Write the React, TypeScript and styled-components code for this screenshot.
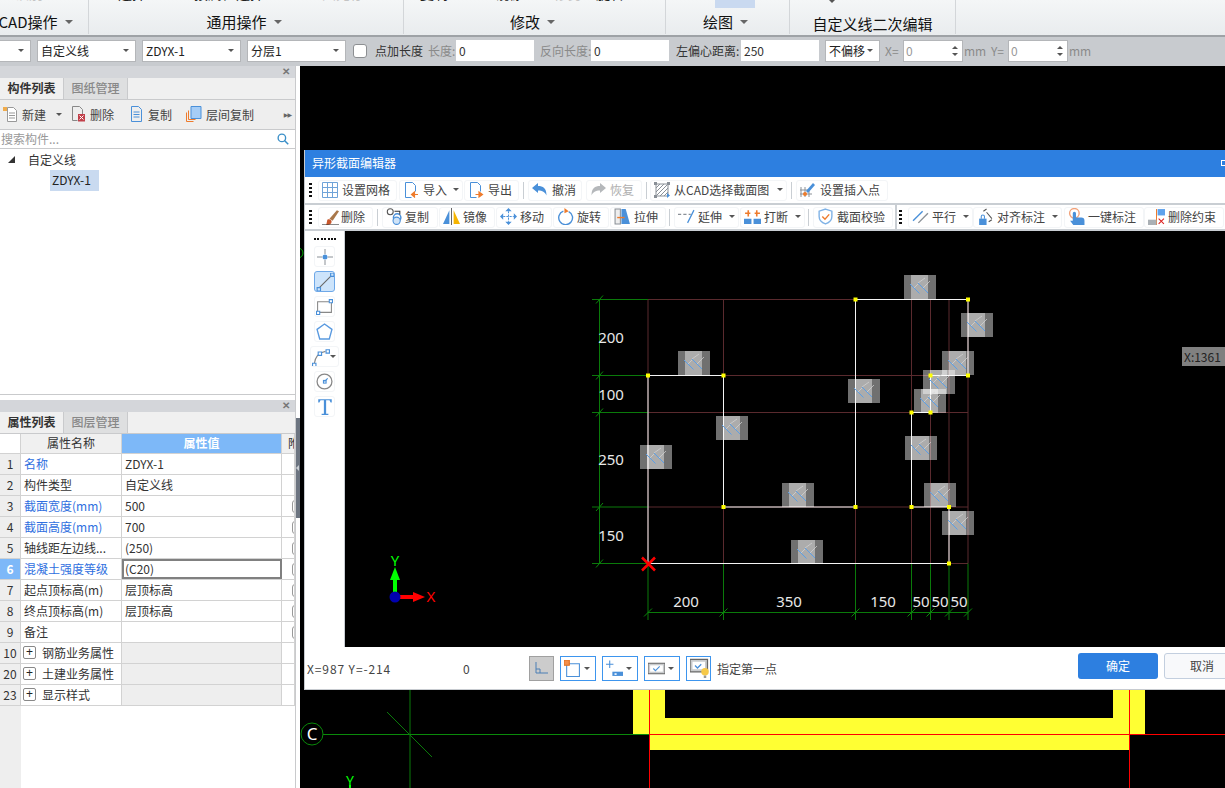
import React from "react";
import styled, { createGlobalStyle } from "styled-components";

const Global = createGlobalStyle`
  html, body { margin: 0; padding: 0; background: #000; overflow: hidden; }
  * { box-sizing: border-box; }
`;

const FONT = `"Noto Sans CJK SC", "Noto Sans", sans-serif`;

const Page = styled.div`
  width: 1225px; height: 788px; overflow: hidden; display: flex; flex-direction: column;
  font-family: ${FONT}; font-size: 12px; color: #333; background: #000;
`;

/* ---------- ribbon ---------- */
const Ribbon = styled.div`
  height: 37px; flex: none; display: flex; overflow: hidden;
  background: linear-gradient(#f4f6f7, #e9ecee); border-bottom: 2px solid #9ea2a6;
`;
const RibbonGroup = styled.div<{ $w: number; $pad?: number; $pr?: number }>`
  width: ${(p) => p.$w}px; flex: none; height: 34px; position: relative; overflow: hidden;
  border-right: 1px solid #d3d6d9; display: flex; justify-content: center; align-items: flex-end;
  padding-bottom: ${(p) => p.$pad ?? 2}px; padding-right: ${(p) => p.$pr ?? 4}px; font-size: 15px; color: #111; gap: 7px; line-height: 20px;
`;
const RibbonCaret = styled.span`
  width: 0; height: 0; border: 4px solid transparent; border-top: 4px solid #666; border-bottom: 0; margin-bottom: 8px;
`;
const RibbonCrop = styled.span<{ $x: number; $muted?: boolean }>`
  position: absolute; top: -15px; left: ${(p) => p.$x}px; font-size: 14px; line-height: 17px; white-space: nowrap;
  color: ${(p) => (p.$muted ? "#c4c4c4" : "#222")};
`;
const RibbonHighlight = styled.span`
  position: absolute; top: 0; left: 49px; width: 40px; height: 8px; background: #c9d9f0;
`;
const RibbonArrow = styled.span`
  position: absolute; top: 0; left: 39px; width: 0; height: 0;
  border: 3px solid transparent; border-top: 3px solid #555; border-bottom: 0;
`;

/* ---------- option bar ---------- */
const OptionBar = styled.div`
  height: 29px; flex: none; display: flex; align-items: center; background: #c8cbcf; padding-bottom: 3px; padding-top: 1px;
`;
const SelectBox = styled.div<{ $w: number; $ml: number }>`
  width: ${(p) => p.$w}px; margin-left: ${(p) => p.$ml}px; height: 22px; flex: none; background: #fff;
  border: 1px solid #b4b6b9; display: flex; align-items: center; justify-content: space-between;
  padding: 0 6px 0 3px; color: #222; font-size: 12px; white-space: nowrap;
`;
const Caret = styled.span`
  width: 0; height: 0; border: 3px solid transparent; border-top: 3px solid #555; border-bottom: 0; flex: none;
`;
const CheckBox = styled.span`
  width: 14px; height: 14px; margin-left: 7px; flex: none; background: #fff; border: 1px solid #8c8f92; border-radius: 3px;
`;
const OptLabel = styled.span<{ $w: number; $ml: number; $muted?: boolean }>`
  width: ${(p) => p.$w}px; margin-left: ${(p) => p.$ml}px; flex: none; white-space: nowrap; font-size: 12px;
  color: ${(p) => (p.$muted ? "#8a8a8a" : "#333")};
`;
const OptInput = styled.div<{ $muted?: boolean }>`
  width: 78px; height: 21px; margin-left: 1px; flex: none; background: #fff; padding-left: 3px; line-height: 21px;
  color: ${(p) => (p.$muted ? "#888" : "#333")};
`;
const Spin = styled.div`
  width: 60px; height: 22px; margin-left: 1px; flex: none; background: #fff; border: 1px solid #b4b6b9;
  display: flex; align-items: center; justify-content: space-between; padding: 0 4px 0 2px; color: #999;
`;
const SpinArrows = styled.span`
  display: flex; flex-direction: column; gap: 4px;
`;
const SpinUp = styled.span`
  width: 0; height: 0; border: 3px solid transparent; border-bottom: 3px solid #555; border-top: 0;
`;

/* ---------- main area ---------- */
const Main = styled.div`
  flex: 1; display: flex; min-height: 0;
`;
const LeftColumn = styled.div`
  width: 296px; flex: none; display: flex; flex-direction: column; background: #fff; overflow: hidden; border-right: 1px solid #c9cacc;
`;
const Splitter = styled.div`
  width: 4px; flex: none; background: #fff; position: relative;
`;
const SplitterThumb = styled.span`
  position: absolute; left: 0; right: 0; top: 352px; height: 100px; background: #6c7480;
`;
const SplitterTick = styled.span`
  position: absolute; left: 0; top: 47px; width: 0; height: 0;
  border: 3px solid transparent; border-right: 3px solid #c9ced3; border-left: 0;
`;
const PanelStrip = styled.div`
  height: 12px; flex: none; background: #d4d6da; display: flex; justify-content: flex-end; align-items: center;
  padding-right: 5px; color: #777; font-size: 10px; line-height: 12px; font-family: "Liberation Sans", sans-serif; font-weight: 700;
`;
const TabsRow = styled.div`
  height: 22px; flex: none; display: flex; background: #f0f0f0; border-bottom: 1px solid #c9cacc;
`;
const Tab = styled.div<{ $active?: boolean }>`
  width: 64px; flex: none; display: flex; align-items: center; justify-content: center; font-size: 12px; padding-bottom: 2px;
  font-weight: ${(p) => (p.$active ? 700 : 500)}; color: ${(p) => (p.$active ? "#333" : "#888")};
  background: ${(p) => (p.$active ? "#f0f0f0" : "#dedfe0")}; border-right: 1px solid #c9cacc;
`;
const PanelTools = styled.div`
  height: 30px; flex: none; background: #eeeeee; display: flex; align-items: center; border-bottom: 1px solid #c9cacc; position: relative;
`;
const PanelTool = styled.span<{ $ml: number }>`
  margin-left: ${(p) => p.$ml}px; display: inline-flex; align-items: center; gap: 4px; white-space: nowrap; color: #444; padding-bottom: 1px;
`;
const MoreArrows = styled.span`
  margin-left: auto; margin-right: 4px; color: #666; font-size: 6px; letter-spacing: -1px; font-family: "DejaVu Sans", sans-serif;
`;
const Search = styled.div`
  height: 19px; flex: none; background: #fff; border-bottom: 1px solid #c9cacc; display: flex; align-items: center;
  justify-content: space-between; padding: 0 6px 1px 1px; color: #999;
`;
const Tree = styled.div`
  height: 246px; flex: none; background: #fff; color: #333; border-bottom: 1px solid #c9cacc;
`;
const TreeRow = styled.div<{ $indent: number }>`
  height: 20px; display: flex; align-items: center; padding-left: ${(p) => p.$indent}px; gap: 13px;
`;
const TreeTri = styled.span`
  width: 0; height: 0; border-left: 7px solid transparent; border-bottom: 7px solid #333;
`;
const TreeSel = styled.span`
  background: #c9daf0; height: 21px; line-height: 20px; margin-top: 2px; padding: 0 2px; width: 49px; color: #222; white-space: nowrap;
`;
const PanelGap = styled.div`
  height: 5px; flex: none; background: #fff;
`;
const Table = styled.div`
  flex: 1; background: #fff; display: flex; flex-direction: column;
`;
const Row = styled.div<{ $h?: number }>`
  height: ${(p) => p.$h ?? 21}px; flex: none; display: flex; border-bottom: 1px solid #d2d2d2;
`;
const Cell = styled.div<{ $w: number; $bg?: string; $color?: string; $center?: boolean; $boxed?: boolean; $bold?: boolean; $pl?: number }>`
  width: ${(p) => p.$w}px; flex: none; position: relative; border-right: 1px solid #d2d2d2; white-space: nowrap; overflow: hidden;
  display: flex; align-items: center; padding-left: ${(p) => p.$pl ?? (p.$center ? 0 : 3)}px; padding-bottom: 2px;
  justify-content: ${(p) => (p.$center ? "center" : "flex-start")};
  background: ${(p) => p.$bg ?? "#fff"}; color: ${(p) => p.$color ?? "#333"}; font-weight: ${(p) => (p.$bold ? 700 : 400)};
  ${(p) => (p.$boxed ? "outline: 2px solid #808080; outline-offset: -2px;" : "")}
`;
const MiniBtn = styled.span`
  position: absolute; left: 10px; top: 4px; width: 10px; height: 13px; border: 1px solid #999; border-radius: 3px; background: #fff;
`;
const Plus = styled.span`
  width: 13px; height: 13px; border: 1px solid #888; border-radius: 2px; margin-right: 6px; font-size: 12px; line-height: 10px;
  text-align: center; color: #222; flex: none; font-family: "Liberation Sans", sans-serif; background: #fff;
`;
const IndexFill = styled.div`
  flex: 1; width: 21px; background: #eee;
`;

/* ---------- cad ---------- */
const Cad = styled.div`
  flex: 1; position: relative; background: #000; overflow: hidden;
`;
const CadBack = styled.svg`
  position: absolute; inset: 0; display: block;
`;
const Dialog = styled.div`
  position: absolute; left: 4px; top: 84px; width: 960px; height: 540px; background: #fff; display: flex; flex-direction: column;
  border-bottom: 1px solid #c7cbd0; border-left: 1px solid #c7cbd0;
`;
const TitleBar = styled.div`
  height: 27px; flex: none; background: #2d7fe0; color: #fff; padding: 0 0 2px 7px; display: flex; align-items: center; position: relative; font-size: 12px;
`;
const WinBtn = styled.span`
  position: absolute; left: 916px; top: 10px; width: 6px; height: 6px; border: 1px solid #fff;
`;
const ToolBar = styled.div<{ $h: number }>`
  height: ${(p) => p.$h}px; flex: none; background: #fff; display: flex; align-items: center; padding-left: 4px;
  border-bottom: 2px solid #c9ced3;
`;
const Grip = styled.span`
  width: 3px; height: 14px; margin-right: 6px; flex: none;
  background: repeating-linear-gradient(#111 0 2px, transparent 2px 4px);
`;
const TB = styled.div<{ $w: number; $ml?: number; $off?: boolean; $gap?: number }>`
  width: ${(p) => p.$w}px; margin-left: ${(p) => p.$ml ?? 0}px; height: 21px; flex: none; display: flex; align-items: center;
  gap: ${(p) => p.$gap ?? 4}px; padding: 0 0 1px 3px; border: 1px solid #f3f5f7; border-radius: 3px; white-space: nowrap; font-size: 12px;
  color: ${(p) => (p.$off ? "#b0b0b0" : "#444")};
`;
const TBCaret = styled(Caret)`
  margin-left: auto; margin-right: 3px;
`;
const Sep = styled.span<{ $ml: number; $mr: number }>`
  width: 1px; height: 17px; background: #c9ced3; margin-left: ${(p) => p.$ml}px; margin-right: ${(p) => p.$mr}px; flex: none;
`;
const ThickSep = styled.span`
  width: 2px; height: 24px; background: #c9ced3; margin: 0 2px 0 2px; flex: none;
`;
const Body = styled.div`
  flex: 1; display: flex; min-height: 0;
`;
const SideTools = styled.div`
  width: 40px; flex: none; background: #fff; border-right: 1px solid #c9ced3; display: flex; flex-direction: column; align-items: center; padding-top: 7px;
`;
const SideDots = styled.span`
  width: 22px; height: 2px; margin-bottom: 6px;
  background: repeating-linear-gradient(90deg, #111 0 2px, transparent 2px 3.4px);
`;
const SideBtn = styled.div<{ $sel?: boolean; $wide?: boolean }>`
  width: ${(p) => (p.$wide ? 29 : 21)}px; height: 21px; margin-bottom: 4px; display: flex; align-items: center;
  justify-content: ${(p) => (p.$wide ? "space-between" : "center")}; padding: ${(p) => (p.$wide ? "0 3px 0 1px" : 0)}; border-radius: 3px;
  border: 1px solid ${(p) => (p.$sel ? "#6ea8e8" : "#f3f5f7")}; background: ${(p) => (p.$sel ? "#cde4fb" : "#fff")};
`;
const Drawing = styled.svg`
  flex: none; display: block; background: #000;
`;
const StatusBar = styled.div`
  height: 42px; flex: none; background: #fff; display: flex; align-items: center; color: #444; position: relative;
`;
const Coords = styled.span`
  margin-left: 2px; width: 156px; flex: none; font-size: 12px; letter-spacing: 0.9px; white-space: nowrap;
`;
const Zero = styled.span`
  width: 66px; flex: none;
`;
const StatusBtn = styled.div<{ $w: number; $gray?: boolean }>`
  width: ${(p) => p.$w}px; height: 25px; margin-right: 6px; flex: none; display: flex; align-items: center; justify-content: space-between;
  padding: 0 5px 0 3px; border: 1px solid ${(p) => (p.$gray ? "#a0a0a0" : "#3d95ee")}; background: ${(p) => (p.$gray ? "#cccccc" : "#fff")};
`;
const Hint = styled.span`
  margin-right: 301px; width: 60px; flex: none; white-space: nowrap;
`;
const Primary = styled.div`
  width: 80px; height: 26px; margin-bottom: 4px; flex: none; background: #2d7fe0; color: #fff; border-radius: 3px; display: flex; align-items: center; justify-content: center; padding-bottom: 1px;
`;
const Secondary = styled.div`
  width: 76px; height: 26px; margin: 0 0 4px 6px; flex: none; background: #f8f9fb; color: #444; border: 1px solid #c3cfdf; border-radius: 3px;
  display: flex; align-items: center; justify-content: center; padding-bottom: 1px;
`;
const CoordTag = styled.div`
  position: absolute; left: 877px; top: 197px; width: 60px; height: 19px; background: #808080; color: #222; padding-left: 2px;
  line-height: 19px; font-size: 12px; white-space: nowrap;
`;

/* ---------- icons ---------- */
const B = "#4a90d9", O = "#ee7b2c", G = "#8a9097";
const Ico = ({ children, s = 16 }: { children: React.ReactNode; s?: number }) => (
  <svg width={s} height={s} viewBox="0 0 16 16" fill="none" style={{ flex: "none" }}>{children}</svg>
);
const IGrid = () => <Ico><path d="M.5.5h15v15H.5zM5.500.5v15M10.500.5v15M.5 5.500h15M.5 10.500h15" stroke="#6fa3d8" /></Ico>;
const IImport = () => <Ico><path d="M2.500.5h7l3 3v6M2.500.5v15h6" stroke={B} /><path d="M15 12.500h-3.500M11.500 10l-3 2.500 3 2.500z" stroke={O} fill={O} strokeWidth={1.2} /></Ico>;
const IExport = () => <Ico><path d="M2.500.5h7l3 3v6M2.500.5v15h6" stroke={B} /><path d="M7.500 12.500H11M11 10l3.500 2.500L11 15z" stroke={O} fill={O} strokeWidth={1.2} /></Ico>;
const IUndo = () => <Ico><path d="M0 6l6-5v3c5 0 8.500 2 8.500 9.500-1.500-3.500-4-5-8.500-5V11z" fill={B} /></Ico>;
const IRedo = () => <Ico><path d="M16 6l-6-5v3C5 4 1.500 6 1.500 13.500 3 10 5.500 8.500 10 8.500V11z" fill="#b5b8bb" /></Ico>;
const IHatch = () => <Ico><path d="M2 2h12v12H2z" stroke={G} /><path d="M2 6l4-4M2 10l8-8M2 14l12-12M6 14l8-8M10 14l4-4" stroke={G} /><path d="M0 0h3v3H0zM13 0h3v3h-3zM0 13h3v3H0z" fill={G} /><path d="M13 11l3 2.500-3 2.500z" fill={B} /></Ico>;
const IInsert = () => <Ico><path d="M1 5v10M5 5v10M9 9v6M0 8h8M0 12h12" stroke={G} /><path d="M6 9l7-8 2 2-7 8z" fill={B} /><circle cx="5" cy="12" r="2" fill={O} /></Ico>;
const IBrush = () => <Ico s={17}><path d="M7 10l7-8 2 1-6 9z" fill="#a9784a" /><path d="M5 11c2-1 4 0 4 2s-2 3-5 3z" fill="#c9572c" /><path d="M0 16h16" stroke="#222" /></Ico>;
const ICopy = () => <Ico s={17}><circle cx="4" cy="3.500" r="2.800" stroke="#555" /><circle cx="10.500" cy="9" r="3.500" stroke={B} strokeWidth={1.400} /><circle cx="10" cy="12" r="3.400" fill="#cfe3f7" stroke={B} /><path d="M8 3h5v3" stroke="#333" /></Ico>;
const IMirror = () => <Ico s={17}><path d="M6 2v13H0z" fill={B} /><path d="M8 0v16" stroke="#666" /><path d="M10 2v13h6z" fill="#f7b500" /></Ico>;
const IMove = () => <Ico s={17}><path d="M8 3v10M3 8h10" stroke={B} strokeDasharray="2 1" /><path d="M8 0l3 3H5zM8 16l3-3H5zM0 8l3-3v6zM16 8l-3-3v6z" fill={B} /></Ico>;
const IRotate = () => <Ico s={17}><path d="M6 3a6.500 6.500 0 1 0 5 .3" stroke={B} strokeWidth={1.300} /><path d="M7 0v5l4-2z" fill={O} /></Ico>;
const IStretch = () => <Ico s={17}><path d="M1 1h5v14H1z" fill="#eee" stroke={G} /><path d="M7 1h4l4 14H7z" fill={B} /><path d="M3 9h7" stroke={O} strokeWidth={1.300} /></Ico>;
const IExtend = () => <Ico s={17}><path d="M0 6h3M5 6h3M10 6h2" stroke={G} /><path d="M15 2L9 14" stroke={B} strokeWidth={1.200} /></Ico>;
const IBreak = () => <Ico s={17}><path d="M0 10h7v5H0zM9 10h7v5H9z" fill={B} /><path d="M1 5h5M4 2v6M10 5h5M12 2v6" stroke={O} strokeWidth={1.500} /></Ico>;
const IShield = () => <Ico s={17}><path d="M8 1l6 2v5c0 4-3 6-6 7-3-1-6-3-6-7V3z" stroke="#7fb2e6" strokeWidth={1.300} /><path d="M5 8l2.500 2.500L11.500 6" stroke={O} strokeWidth={1.300} /></Ico>;
const IParallel = () => <Ico s={17}><path d="M1 12L10 3" stroke={B} strokeWidth={1.300} /><path d="M6 14l9-9" stroke={G} strokeWidth={1.300} /></Ico>;
const IAlign = () => <Ico s={17}><path d="M2 10h7v6H2z" fill={B} /><path d="M4 10V8a1.500 1.500 0 0 1 3 0v2" stroke={B} /><path d="M6 3l3-2M9 4l5 6M11 13l3-2" stroke="#555" /></Ico>;
const IHand = () => <Ico s={17}><circle cx="6" cy="5" r="4.500" stroke="#f2a27a" strokeWidth={1.300} /><path d="M4.500 5a1.500 1.500 0 0 1 3 0v4h5c2 0 3 1 3 3v4H5l-3-4h2.500z" fill={B} /></Ico>;
const IDelC = () => <Ico s={17}><path d="M9 1h7v6H9z" fill="#5ea2ec" /><path d="M8 1v15" stroke={O} /><path d="M0 11h8v5H0z" fill="#aab0b5" /><path d="M10 10l5 5M15 10l-5 5" stroke="#d22" /></Ico>;

const INew = () => <Ico><path d="M5.500 1.500h6l3 3v11h-9z" fill="#fff" stroke="#999" /><path d="M7 7h6M7 9.500h6M7 12h6" stroke="#999" /><path d="M1 1h4v4H1z" fill="#f0a030" opacity={0.85} /></Ico>;
const IDel = () => <Ico><path d="M2.500.5h7l3 3v6M2.500.5v14h5" stroke="#888" /><path d="M8 8h7v7.500H8z" fill="#c2404a" /><path d="M9.500 9.500l4 4M13.500 9.500l-4 4" stroke="#fff" /></Ico>;
const IDoc = () => <Ico><path d="M3.500.5h7l3 3v12h-10z" stroke={B} /><path d="M5.500 6h6M5.500 8.500h6M5.500 11h6" stroke={B} /></Ico>;
const ILayer = () => <Ico><path d="M.5 6.500v9h7" stroke={O} /><path d="M2.500 4.500v9h7" stroke={O} /><path d="M5 .5h10v12H5z" fill="#a6cdf6" stroke={B} /></Ico>;
const ISearch = () => <Ico s={12}><circle cx="6.500" cy="6.500" r="5" stroke="#3a8fc8" strokeWidth={1.800} /><path d="M10 10l5 5" stroke="#3a8fc8" strokeWidth={2} /></Ico>;

const SPoint = () => <Ico><path d="M0 8h5M11 8h5M8 0v5M8 11v5" stroke={G} /><circle cx="8" cy="8" r="2.500" fill={B} /></Ico>;
const SLine = () => <Ico s={18}><path d="M3 13L13 3" stroke="#666" /><path d="M1 13h3v3H1zM13 0h3v3h-3z" stroke={B} /></Ico>;
const SRect = () => <Ico s={17}><path d="M1.500 3.500h13v10h-13z" stroke="#888" /><path d="M.5 12.500h3v3h-3zM12.500 1.500h3v3h-3z" stroke={B} fill="#fff" /></Ico>;
const SPoly = () => <Ico s={17}><path d="M8 1l7 5-2.500 9h-9L1 6z" stroke="#5a9ae0" strokeWidth={1.300} /></Ico>;
const SArc = () => <Ico s={18}><path d="M2 14C3 7 6 4 12 3" stroke="#888" /><path d="M.5 13.500h3v3h-3zM5.500 3.500h3v3h-3zM12.500 1.500h3v3h-3z" stroke={B} fill="#fff" /></Ico>;
const SCircle = () => <Ico s={17}><circle cx="8" cy="8" r="7" stroke="#888" strokeWidth={1.200} /><path d="M8 8l3-3" stroke={B} /><rect x="7" y="7" width="2.500" height="2.500" stroke={B} /></Ico>;
const SText = () => <Ico s={18}><path d="M2 1h12v3h-1l-1-2H9v12h2v1H5v-1h2V2H4L3 4H2z" fill={B} /></Ico>;

const SOrtho = () => <Ico><path d="M3 2v11h12M3 9h4v4" stroke="#4a7fb5" /></Ico>;
const SSnap = () => <Ico s={17}><path d="M2.500 3.500h12v12h-12z" stroke={B} /><path d="M0 0h5v5H0z" fill="#f58f4a" stroke="#e07020" /></Ico>;
const SDim = () => <Ico s={17}><path d="M0 4h7M3.500 .5v7" stroke={B} /><path d="M6 11h11v4H6z" fill={B} /><path d="M8 12.500h2v1.500H8z" fill="#fff" /></Ico>;
const SCheck = () => <Ico s={17}><path d="M0 3h16v10H0z" fill="#c9cbcd" stroke="#666" /><path d="M2 5h12v6H2z" fill="#fff" /><path d="M5 8l2 2 4-4" stroke={B} /></Ico>;
const SBulb = () => <Ico s={20}><path d="M0 1h14v10H0z" fill="#c9cbcd" stroke="#666" /><path d="M2 3h10v6H2z" fill="#fff" /><path d="M4 6l2 2 3-3" stroke={B} /><circle cx="12" cy="11" r="3" fill="#f7c948" /><path d="M11 14h2v2h-2z" fill="#999" /></Ico>;

/* ---------- drawing data ---------- */
const DX = 345, DY = 231;
const xs = [648, 723.5, 855.5, 911.5, 930.5, 949, 968];
const ys = [299.5, 375.5, 412.5, 507, 563.5];
const outline: [number, number][] = [
  [648, 563.5], [648, 375.5], [723.5, 375.5], [723.5, 507], [855.5, 507], [855.5, 299.5], [968, 299.5], [968, 375.5],
  [930.5, 375.5], [930.5, 412.5], [911.5, 412.5], [911.5, 507], [949, 507], [949, 563.5],
];
const tiles: [number, number][] = [
  [904, 275], [961, 313], [942, 351], [923, 370], [914, 389], [848, 379], [678, 351],
  [716, 416], [640, 445], [905, 436], [782, 483], [924, 483], [942, 511], [791, 540],
];
const Tile = ({ x, y }: { x: number; y: number }) => (
  <g transform={`translate(${x} ${y})`}>
    <rect width="32" height="24" fill="#fff" fillOpacity={0.44} />
    <rect x="7" width="17" height="24" fill="#fff" fillOpacity={0.42} />
    <path d="M10 13l5-5M19 13l7-7M14 8l7-5" stroke="#d8d8d8" strokeWidth={1} opacity={0.7} />
    <path d="M6 9l9.500 9.500M14 8l10 10" stroke="#5b9fe6" strokeWidth={1} />
  </g>
);
const DimText = styled.text`
  fill: #e8e8e8; font-family: "Noto Sans", sans-serif; font-size: 15px; text-anchor: middle;
`;
const AxisText = styled.text<{ $c: string }>`
  fill: ${(p) => p.$c}; font-family: "Noto Sans", sans-serif; font-size: 15px; text-anchor: middle;
`;

const rows: { n: string; name: string; val: string; blue?: boolean; btn?: boolean; sel?: boolean }[] = [
  { n: "1", name: "名称", val: "ZDYX-1", blue: true },
  { n: "2", name: "构件类型", val: "自定义线" },
  { n: "3", name: "截面宽度(mm)", val: "500", blue: true, btn: true },
  { n: "4", name: "截面高度(mm)", val: "700", blue: true, btn: true },
  { n: "5", name: "轴线距左边线...", val: "(250)", btn: true },
  { n: "6", name: "混凝土强度等级", val: "(C20)", blue: true, btn: true, sel: true },
  { n: "7", name: "起点顶标高(m)", val: "层顶标高", btn: true },
  { n: "8", name: "终点顶标高(m)", val: "层顶标高", btn: true },
  { n: "9", name: "备注", val: "", btn: true },
];

export default function App() {
  return (
    <Page>
      <Global />
      <Ribbon>
        <RibbonGroup $w={89} $pr={0}><RibbonCrop $x={15} $muted>识别</RibbonCrop><span style={{ marginLeft: -17 }}>CAD操作</span><RibbonCaret /></RibbonGroup>
        <RibbonGroup $w={315}><RibbonCrop $x={29}>选择</RibbonCrop><RibbonCrop $x={105}>按属性选择</RibbonCrop><RibbonCrop $x={233} $muted>图元存盘</RibbonCrop><span>通用操作</span><RibbonCaret /></RibbonGroup>
        <RibbonGroup $w={262}><RibbonCrop $x={16}>复制</RibbonCrop><RibbonCrop $x={91}>镜像</RibbonCrop><RibbonCrop $x={150} $muted>修剪</RibbonCrop><RibbonCrop $x={192}>旋转</RibbonCrop><span>修改</span><RibbonCaret /></RibbonGroup>
        <RibbonGroup $w={124}><RibbonHighlight /><span>绘图</span><RibbonCaret /></RibbonGroup>
        <RibbonGroup $w={166} $pad={0} $pr={0}><RibbonArrow /><span>自定义线二次编辑</span></RibbonGroup>
      </Ribbon>

      <OptionBar>
        <SelectBox $w={32} $ml={-1}><span /><Caret /></SelectBox>
        <SelectBox $w={99} $ml={6}>自定义线<Caret /></SelectBox>
        <SelectBox $w={99} $ml={6}>ZDYX-1<Caret /></SelectBox>
        <SelectBox $w={99} $ml={6}>分层1<Caret /></SelectBox>
        <CheckBox />
        <OptLabel $w={48} $ml={8}>点加长度</OptLabel>
        <OptLabel $w={27} $ml={5} $muted>长度:</OptLabel>
        <OptInput>0</OptInput>
        <OptLabel $w={50} $ml={6} $muted>反向长度:</OptLabel>
        <OptInput>0</OptInput>
        <OptLabel $w={64} $ml={7}>左偏心距离:</OptLabel>
        <OptInput>250</OptInput>
        <SelectBox $w={55} $ml={6}>不偏移<Caret /></SelectBox>
        <OptLabel $w={17} $ml={5} $muted>X=</OptLabel>
        <Spin>0<SpinArrows><SpinUp /><Caret /></SpinArrows></Spin>
        <OptLabel $w={22} $ml={1} $muted>mm</OptLabel>
        <OptLabel $w={16} $ml={5} $muted>Y=</OptLabel>
        <Spin>0<SpinArrows><SpinUp /><Caret /></SpinArrows></Spin>
        <OptLabel $w={22} $ml={1} $muted>mm</OptLabel>
      </OptionBar>

      <Main>
        <LeftColumn>
          <PanelStrip>✕</PanelStrip>
          <TabsRow><Tab $active>构件列表</Tab><Tab>图纸管理</Tab></TabsRow>
          <PanelTools>
            <PanelTool $ml={2}><INew />新建<Caret style={{ marginLeft: 6 }} /></PanelTool>
            <PanelTool $ml={8}><IDel />删除</PanelTool>
            <PanelTool $ml={14}><IDoc />复制</PanelTool>
            <PanelTool $ml={14}><ILayer />层间复制</PanelTool>
            <MoreArrows>▶▶</MoreArrows>
          </PanelTools>
          <Search>搜索构件...<ISearch /></Search>
          <Tree>
            <TreeRow $indent={8}><TreeTri />自定义线</TreeRow>
            <TreeRow $indent={50}><TreeSel>ZDYX-1</TreeSel></TreeRow>
          </Tree>
          <PanelGap />
          <PanelStrip>✕</PanelStrip>
          <TabsRow><Tab $active>属性列表</Tab><Tab>图层管理</Tab></TabsRow>
          <Table>
            <Row $h={20}>
              <Cell $w={21} $bg="#fff" />
              <Cell $w={101} $bg="#f0f0f0" $center>属性名称</Cell>
              <Cell $w={160} $bg="#7db8f8" $color="#fff" $center $bold>属性值</Cell>
              <Cell $w={13} $bg="#f0f0f0" $pl={6}>附</Cell>
            </Row>
            {rows.map((r) => (
              <Row key={r.n}>
                <Cell $w={21} $center $bg={r.sel ? "#7db8f8" : "#eee"} $color={r.sel ? "#fff" : "#333"} $bold={r.sel}>{r.n}</Cell>
                <Cell $w={101} $color={r.blue ? "#2f6fe0" : "#333"}>{r.name}</Cell>
                <Cell $w={160} $boxed={r.sel}>{r.val}</Cell>
                <Cell $w={13}>{r.btn && <MiniBtn />}</Cell>
              </Row>
            ))}
            {[["10", "钢筋业务属性"], ["20", "土建业务属性"], ["23", "显示样式"]].map(([n, t]) => (
              <Row key={n}>
                <Cell $w={21} $center $bg="#eee">{n}</Cell>
                <Cell $w={101} $pl={2}><Plus>+</Plus>{t}</Cell>
                <Cell $w={160} $bg="#eee" />
                <Cell $w={13} />
              </Row>
            ))}
            <IndexFill />
          </Table>
        </LeftColumn>
        <Splitter><SplitterThumb><SplitterTick /></SplitterThumb></Splitter>

        <Cad>
          <CadBack width="925" height="722">
            <circle cx="-2" cy="187" r="5" fill="none" stroke="#0a0" />
            <path d="M333 624h32v44h-32zM350 652h479v32H350zM813 624h32v44h-32z" fill="#ffff33" />
            <path d="M110 624v98" stroke="#0a7a0a" />
            <path d="M23 668.500h327" stroke="#0a8a0a" />
            <path d="M87 646l45 45" stroke="#0a7a0a" />
            <path d="M350 668.500h575M349.500 624v98M829.500 624v98" stroke="#f00" />
            <circle cx="12" cy="668" r="11" fill="none" stroke="#0a8a0a" />
            <text x="12" y="674" fill="#fff" fontSize="17" fontFamily="'Noto Sans', sans-serif" textAnchor="middle">C</text>
            <path d="M50 719v3" stroke="#0f0" strokeWidth={2} />
            <text x="50" y="720" fill="#0f0" fontSize="14" fontFamily="'Noto Sans', sans-serif" textAnchor="middle">Y</text>
          </CadBack>

          <Dialog>
            <TitleBar>异形截面编辑器<WinBtn /></TitleBar>
            <ToolBar $h={28}>
              <Grip />
              <TB $w={79}><IGrid />设置网格</TB>
              <TB $w={64} $ml={2}><IImport />导入<TBCaret /></TB>
              <TB $w={55} $ml={1}><IExport />导出</TB>
              <Sep $ml={4} $mr={4} />
              <TB $w={54}><IUndo />撤消</TB>
              <TB $w={56} $ml={4} $off><IRedo />恢复</TB>
              <Sep $ml={4} $mr={3} />
              <TB $w={137}><IHatch />从CAD选择截面图<TBCaret /></TB>
              <Sep $ml={4} $mr={4} />
              <TB $w={92}><IInsert />设置插入点</TB>
            </ToolBar>
            <ToolBar $h={26}>
              <Grip />
              <TB $w={55} $gap={2}><IBrush />删除</TB>
              <Sep $ml={4} $mr={4} />
              <TB $w={56} $gap={2}><ICopy />复制</TB>
              <TB $w={56} $ml={1} $gap={3}><IMirror />镜像</TB>
              <TB $w={56} $ml={1} $gap={3}><IMove />移动</TB>
              <TB $w={56} $ml={1} $gap={3}><IRotate />旋转</TB>
              <TB $w={56} $ml={1} $gap={3}><IStretch />拉伸</TB>
              <Sep $ml={3} $mr={4} />
              <TB $w={65} $gap={3}><IExtend />延伸<TBCaret /></TB>
              <TB $w={65} $ml={1} $gap={3}><IBreak />打断<TBCaret /></TB>
              <Sep $ml={3} $mr={4} />
              <TB $w={80} $gap={3}><IShield />截面校验</TB>
              <ThickSep />
              <Grip />
              <TB $w={65} $gap={3}><IParallel />平行<TBCaret /></TB>
              <TB $w={89} $gap={3}><IAlign />对齐标注<TBCaret /></TB>
              <TB $w={80} $ml={2} $gap={3}><IHand />一键标注</TB>
              <TB $w={80} $gap={3}><IDelC />删除约束</TB>
            </ToolBar>
            <Body>
              <SideTools>
                <SideDots />
                <SideBtn><SPoint /></SideBtn>
                <SideBtn $sel><SLine /></SideBtn>
                <SideBtn><SRect /></SideBtn>
                <SideBtn><SPoly /></SideBtn>
                <SideBtn $wide><SArc /><Caret /></SideBtn>
                <SideBtn><SCircle /></SideBtn>
                <SideBtn><SText /></SideBtn>
              </SideTools>
              <Drawing width="919" height="416" viewBox={`${DX} ${DY} 919 416`}>
                {xs.map((x) => <path key={x} d={`M${x} 299.500V563.500`} stroke="#5a2a2e" />)}
                {ys.map((y) => <path key={y} d={`M648 ${y}H968`} stroke="#5a2a2e" />)}
                <path d="M599.500 299.500V563.500M592 299.500h56M592 375.500h56M592 412.500h56M592 507h56M592 563.500h56" stroke="#0a7a0a" />
                <path d="M648 612.500H968" stroke="#0a7a0a" />
                {xs.map((x) => <path key={x} d={`M${x} 563.500V620`} stroke="#0a7a0a" />)}
                {ys.map((y) => <path key={y} d={`M596 ${y + 4}l7-8`} stroke="#0a8a0a" />)}
                {xs.map((x) => <path key={x} d={`M${x - 4} 616.500l8-8`} stroke="#0a8a0a" />)}
                <DimText x="611" y="343">200</DimText>
                <DimText x="611" y="400">100</DimText>
                <DimText x="611" y="465">250</DimText>
                <DimText x="611" y="541">150</DimText>
                <DimText x="686" y="607">200</DimText>
                <DimText x="789" y="607">350</DimText>
                <DimText x="883" y="607">150</DimText>
                <DimText x="921" y="607">50</DimText>
                <DimText x="940" y="607">50</DimText>
                <DimText x="959" y="607">50</DimText>
                <polygon points={outline.map((p) => p.join(",")).join(" ")} fill="none" stroke="#f4f4f4" strokeWidth={1} />
                {tiles.map(([x, y]) => <Tile key={`${x}-${y}`} x={x} y={y} />)}
                {outline.slice(1).map(([x, y]) => <rect key={`${x}:${y}`} x={x - 2} y={y - 2} width="4" height="4" fill="#ff0" />)}
                <path d="M642 557.500l13 13M655 557.500l-13 13" stroke="#f00" strokeWidth={2.500} />
                <path d="M395 597v-20" stroke="#0f0" strokeWidth={4} />
                <path d="M395 567l5 13h-10z" fill="#0f0" />
                <path d="M395 597h18" stroke="#f00" strokeWidth={4} />
                <path d="M425 597l-12-5v10z" fill="#f00" />
                <circle cx="395" cy="597" r="5.500" fill="#0000b0" />
                <AxisText $c="#0f0" x="395" y="566">Y</AxisText>
                <AxisText $c="#f00" x="431" y="602">X</AxisText>
              </Drawing>
            </Body>
            <StatusBar>
              <Coords>X=987 Y=-214</Coords>
              <Zero>0</Zero>
              <StatusBtn $w={25} $gray><SOrtho /></StatusBtn>
              <StatusBtn $w={36}><SSnap /><Caret /></StatusBtn>
              <StatusBtn $w={36}><SDim /><Caret /></StatusBtn>
              <StatusBtn $w={36}><SCheck /><Caret /></StatusBtn>
              <StatusBtn $w={25}><SBulb /></StatusBtn>
              <Hint>指定第一点</Hint>
              <Primary>确定</Primary>
              <Secondary>取消</Secondary>
            </StatusBar>
            <CoordTag>X:1361</CoordTag>
          </Dialog>
        </Cad>
      </Main>
    </Page>
  );
}
